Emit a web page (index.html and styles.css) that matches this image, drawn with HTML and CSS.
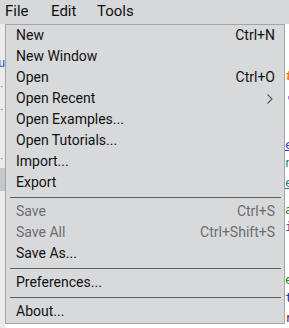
FILE: index.html
```html
<!DOCTYPE html>
<html>
<head>
<meta charset="utf-8">
<link rel="stylesheet" href="styles.css">
</head>
<body>
<div class="app">
  <div class="menubar">
    <div class="mb-item open">File</div>
    <div class="mb-item">Edit</div>
    <div class="mb-item">Tools</div>
  </div>
  <div class="workspace">
    <div class="sidebar">
      <div class="sb-line sb-u">u</div>
      <div class="sb-dot d1">·</div>
      <div class="sb-dot d2">·</div>
      <div class="sb-dot d3">·</div>
      <div class="sb-block"></div>
    </div>
    <div class="editor">
      <div class="code l1"><span class="c-orange">t</span></div>
      <div class="code l2"><span class="c-blue">''</span></div>
      <div class="code l3"><span class="c-blue u">e</span></div>
      <div class="code l4"><span class="c-teal">n</span></div>
      <div class="code l5"><span class="c-teal u">e</span></div>
      <div class="code l6"><span class="c-green">a</span></div>
      <div class="code l7"><span class="c-purple">i</span></div>
      <div class="code l8"><span class="c-green">e</span></div>
      <div class="code l9"><span class="c-navy">t</span></div>
      <div class="code l10"><span class="c-red">r</span></div>
    </div>
  </div>

  <div class="dropdown">
    <div class="mi"><span>New</span><span class="sc">Ctrl+N</span></div>
    <div class="mi"><span>New Window</span></div>
    <div class="mi"><span>Open</span><span class="sc">Ctrl+O</span></div>
    <div class="mi"><span>Open Recent</span>
      <svg class="arrow" width="6" height="10" viewBox="0 0 6 10"><path d="M0.5 0.5 L5 5 L0.5 9.5" fill="none" stroke="#555" stroke-width="1.1"/></svg>
    </div>
    <div class="mi"><span>Open Examples...</span></div>
    <div class="mi"><span>Open Tutorials...</span></div>
    <div class="mi"><span>Import...</span></div>
    <div class="mi"><span>Export</span></div>
    <div class="sep"></div>
    <div class="mi disabled"><span>Save</span><span class="sc">Ctrl+S</span></div>
    <div class="mi disabled"><span>Save All</span><span class="sc">Ctrl+Shift+S</span></div>
    <div class="mi"><span>Save As...</span></div>
    <div class="sep"></div>
    <div class="mi"><span>Preferences...</span></div>
    <div class="sep"></div>
    <div class="mi"><span>About...</span></div>
  </div>
</div>
</body>
</html>
```

FILE: styles.css
```css
html, body {
  margin: 0;
  padding: 0;
}
body {
  width: 289px;
  height: 328px;
  overflow: hidden;
  background: #ffffff;
  font-family: Roboto, "Liberation Sans", sans-serif;
}
.app {
  position: relative;
  width: 289px;
  height: 328px;
  display: flex;
  flex-direction: column;
}
.menubar {
  height: 24px;
  background: #d7d8da;
  display: flex;
  align-items: flex-start;
  flex: none;
}
.mb-item {
  width: 41px;
  padding-left: 5px;
  font-size: 15px;
  line-height: 23px;
  color: #111;
}
.workspace {
  flex: 1;
  display: flex;
}
.sidebar {
  width: 5px;
  background: #ebebeb;
  display: flex;
  flex-direction: column;
  overflow: hidden;
  flex: none;
}
.sb-line {
  font-family: "DejaVu Sans Mono", monospace;
  font-size: 12px;
  line-height: 14px;
  margin-left: -2px;
}
.sb-u { color: #2a55c0; margin-top: 32px; }
.sb-dot {
  color: #6a80c0;
  font-size: 12px;
  line-height: 10px;
  margin-left: 0;
}
.d1 { margin-top: 12px; }
.d2 { margin-top: 13px; }
.d3 { margin-top: 39px; }
.sb-block {
  margin-top: 4px;
  height: 23px;
  background: #c4c6c9;
}
.editor {
  flex: 1;
  display: flex;
  flex-direction: column;
  background: #fff;
  padding-left: 280px;
  font-family: "DejaVu Sans Mono", monospace;
  font-size: 13px;
  overflow: hidden;
}
.code {
  height: 18px;
  line-height: 18px;
  white-space: nowrap;
}
.l1 { margin-top: 43px; }
.l2 { margin-top: 7px; }
.l3 { margin-top: 26px; }
.l4 { margin-top: 0; }
.l5 { margin-top: 2px; }
.l6 { margin-top: 11px; height: 14px; line-height: 14px; }
.l7 { margin-top: 3px; height: 14px; line-height: 14px; }
.l8 { margin-top: 37px; }
.l9 { margin-top: 0; }
.l10 { margin-top: 2px; }
.c-orange { color: #f07a2a; font-style: italic; font-weight: bold; }
.c-blue { color: #3040e0; }
.c-teal { color: #20808a; }
.c-green { color: #1a8a2a; }
.c-purple { color: #5a2a8a; }
.c-navy { color: #1a2a8a; }
.c-red { color: #7a1a2a; }
.u { text-decoration: underline; }

.dropdown {
  position: absolute;
  left: 5px;
  top: 24px;
  width: 278px;
  background: #d8d9db;
  border: 1px solid #a3a4a6;
  padding-bottom: 1px;
  display: flex;
  flex-direction: column;
}
.mi {
  height: 21px;
  line-height: 21px;
  font-size: 14px;
  color: #111;
  padding: 0 9px 0 10px;
  display: flex;
  justify-content: space-between;
  align-items: center;
  white-space: nowrap;
}
.mi.disabled {
  color: #6c6d6f;
}
.sc {
  color: inherit;
}
.arrow {
  margin-right: 2px;
}
.sep {
  height: 1px;
  background: #5e5f61;
  margin: 4px 3px 3px 4px;
}
```
